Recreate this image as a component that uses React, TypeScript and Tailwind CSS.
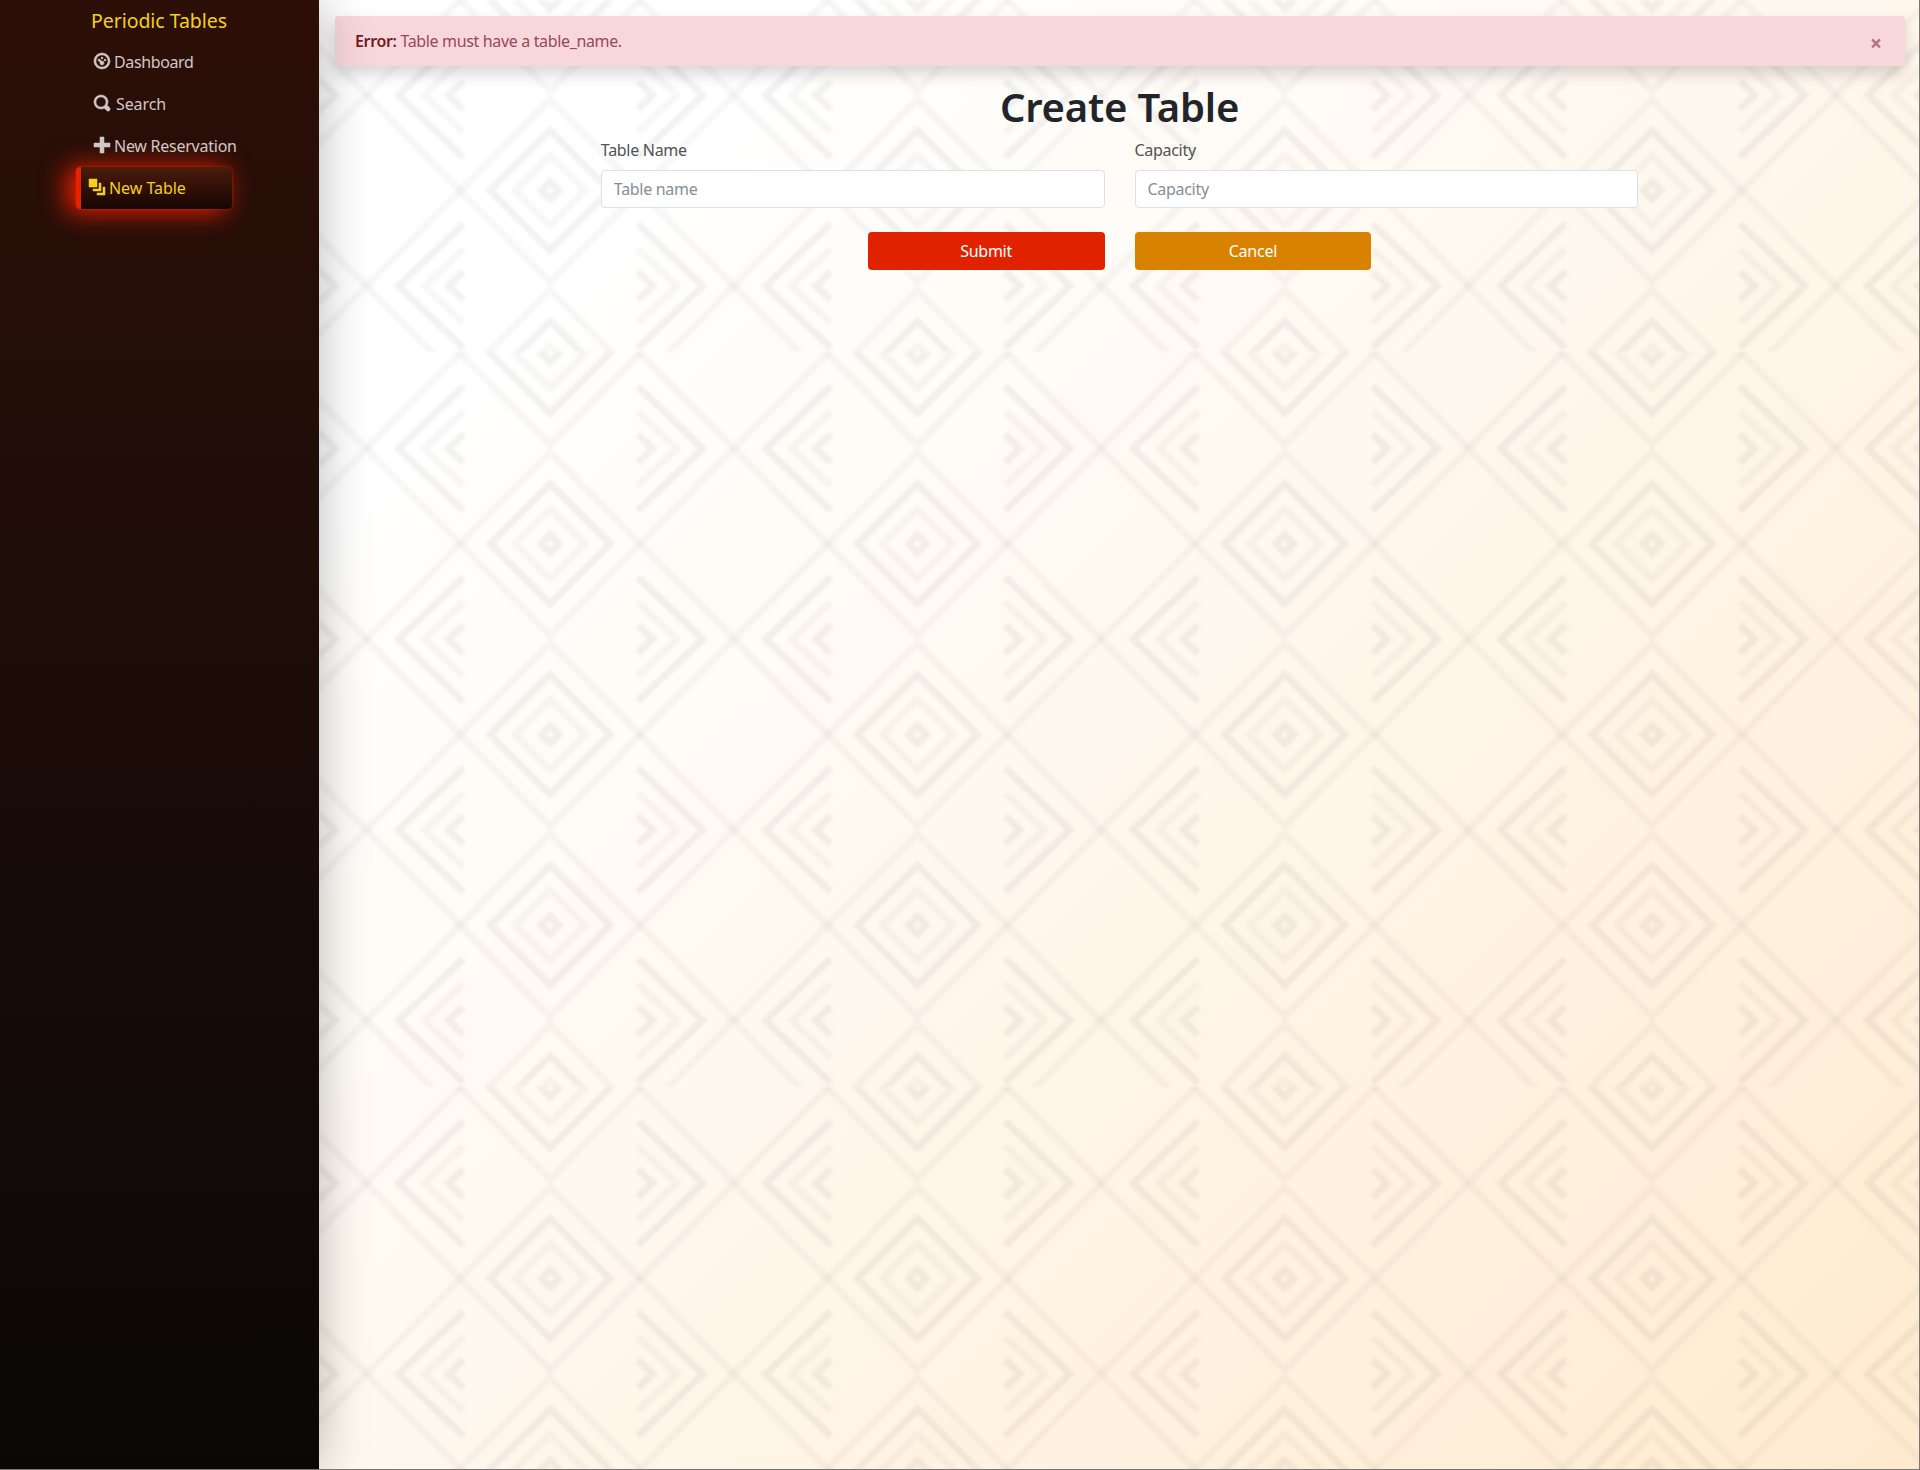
import type { ReactNode } from "react";

const TILE_W = 367.35;
const TILE_H = 734.7;
const STEP = 190.7;
const rows = [-1, 0, 1, 2, 3, 4];

function diamond(cx: number, cy: number, r: number) {
  return `M${cx} ${cy - r}L${cx + r} ${cy}L${cx} ${cy + r}L${cx - r} ${cy}Z`;
}

function chevron(x: number, y: number, end: number, dy: number) {
  return `M${end} ${y - dy}L${x} ${y}L${end} ${y + dy}`;
}

function Backdrop() {
  const mid = TILE_W / 2;
  return (
    <svg className="absolute inset-0 h-full w-full" aria-hidden="true">
      <defs>
        <pattern
          id="weave"
          width={TILE_W}
          height={TILE_H}
          patternUnits="userSpaceOnUse"
          patternTransform="translate(47.4 352.1)"
        >
          <g fill="none" stroke="#1a0800">
            {rows.map((k) => {
              const c = 1 + k * STEP;
              const n = c + STEP / 2;
              return (
                <g key={k}>
                  <g strokeWidth="7" strokeOpacity="0.03">
                    <path d={`M-4 ${n - 4}L${mid} ${n + STEP - 4}L${TILE_W + 4} ${n - 4}`} />
                    <path d={`M-4 ${n + 4}L${mid} ${n - STEP + 4}L${TILE_W + 4} ${n + 4}`} />
                    <path d={diamond(mid, c, 35)} />
                    <path d={chevron(58, n, 97, 37)} />
                    <path d={chevron(TILE_W - 57, n, TILE_W - 96, 37)} />
                  </g>
                  <g strokeWidth="7" strokeOpacity="0.052">
                    <path d={diamond(mid, c, 60)} />
                    <path d={diamond(mid, c, 9)} />
                    <path d={chevron(32, n, 97, 62)} />
                    <path d={chevron(TILE_W - 31, n, TILE_W - 96, 62)} />
                    <path d={chevron(82, n, 97, 14)} />
                    <path d={chevron(TILE_W - 81, n, TILE_W - 96, 14)} />
                  </g>
                </g>
              );
            })}
          </g>
        </pattern>
        <filter id="soften" x="0" y="0" width="100%" height="100%">
          <feGaussianBlur stdDeviation="1.6" />
        </filter>
      </defs>
      <rect width="100%" height="100%" fill="url(#weave)" filter="url(#soften)" />
    </svg>
  );
}

const icons = {
  dashboard:
    "M4 0c-2.2 0-4 1.8-4 4s1.8 4 4 4 4-1.8 4-4-1.8-4-4-4zm0 1c1.66 0 3 1.34 3 3s-1.34 3-3 3-3-1.34-3-3 1.34-3 3-3zm0 1c-.28 0-.5.22-.5.5s.22.5.5.5.5-.22.5-.5-.22-.5-.5-.5zm-1.66 1a.5.5 0 0 0-.19.84l.91.91c-.02.08-.06.16-.06.25 0 .55.45 1 1 1s1-.45 1-1-.45-1-1-1c-.09 0-.17.04-.25.06l-.91-.91a.5.5 0 0 0-.44-.16.5.5 0 0 0-.06 0zm3.16 0c-.28 0-.5.22-.5.5s.22.5.5.5.5-.22.5-.5-.22-.5-.5-.5z",
  search:
    "M3.5 0c-1.93 0-3.5 1.57-3.5 3.5s1.57 3.5 3.5 3.5c.59 0 1.17-.14 1.66-.41a1 1 0 0 0 .13.13l1 1a1.02 1.02 0 1 0 1.44-1.44l-1-1a1 1 0 0 0-.16-.13c.27-.49.44-1.06.44-1.66 0-1.93-1.55-3.5-3.5-3.5zm0 1c1.39 0 2.5 1.11 2.5 2.5 0 .66-.24 1.27-.66 1.72-.01.01-.02.02-.03.03a1 1 0 0 0-.13.13c-.44.4-1.04.63-1.69.63-1.39 0-2.5-1.11-2.5-2.5s1.11-2.5 2.5-2.5z",
  plus: "M3 0v3h-3v2h3v3h2v-3h3v-2h-3v-3h-2z",
  layers: "M0 0v4h4v-4h-4zm5 2v3h-3v1h4v-4h-1zm2 2v3h-3v1h4v-4h-1z",
};

function Icon({ name }: { name: keyof typeof icons }) {
  return (
    <svg
      viewBox="0 0 8 8"
      className="-mt-0.5 h-4 w-4 shrink-0 overflow-visible"
      fill="currentColor"
      stroke="currentColor"
      strokeWidth="0.26"
    >
      <path d={icons[name]} />
    </svg>
  );
}

function NavLink({ icon, children }: { icon: keyof typeof icons; children: ReactNode }) {
  return (
    <a className="flex h-[42px] items-center gap-1 pl-[18px] text-[#cfc8c6]">
      <Icon name={icon} />
      {children}
    </a>
  );
}

function Field({ label, placeholder }: { label: string; placeholder: string }) {
  return (
    <label className="col-span-4 flex flex-col px-[15px]">
      <span className="mb-2 h-6 leading-6 tracking-[-0.3px] text-[#505256]">{label}</span>
      <input
        className="h-[38px] rounded border border-[#dbe1e7] bg-white px-3 tracking-[-0.3px] outline-none placeholder:text-[#868e96]"
        placeholder={placeholder}
      />
    </label>
  );
}

export default function App() {
  return (
    <div className="relative flex h-[1470px] w-[1920px] overflow-hidden bg-white font-['Noto_Sans',sans-serif] text-base">
      <aside className="relative z-10 w-[319px] shrink-0 bg-linear-to-b from-[#2c0f07] to-[#0a0807] shadow-[0_0_48px_rgba(0,0,0,0.28)]">
        <div className="flex h-[41px] items-center pl-[91px] text-[19.5px] text-[#f4cf20]">
          <span className="tracking-[-0.05px]">Periodic Tables</span>
        </div>
        <nav className="pl-[76px] tracking-[-0.25px]">
          <NavLink icon="dashboard">
            <span className="tracking-[-0.38px]">Dashboard</span>
          </NavLink>
          <NavLink icon="search">
            <span className="pl-0.5 tracking-[-0.1px]">Search</span>
          </NavLink>
          <NavLink icon="plus">New Reservation</NavLink>
          <a className="flex h-[42px] w-[156px] items-center gap-1 rounded border-l-[5px] border-[#e62200] bg-linear-to-b from-[#4c1b0d] to-[#170602] pl-2 text-[#f4cf20] shadow-[0_0_2px_#e62200,-8px_2px_26px_1px_rgba(240,34,0,1)]">
            <Icon name="layers" />
            <span className="tracking-[-0.05px]">New Table</span>
          </a>
        </nav>
      </aside>

      <main className="relative flex-1 bg-[linear-gradient(135deg,#ffffff_17%,#fff7ec_53%,#ffeacf_100%)]">
        <Backdrop />
        <div className="relative pt-4">
          <div className="mr-[15px] ml-4 flex h-[50px] items-center justify-between rounded bg-[#f8d7da] pr-[23px] pl-[20px] text-[#96495a] shadow-[0_8px_16px_rgba(0,0,0,0.16)]">
            <p className="tracking-[-0.35px]">
              <strong className="font-semibold text-[#721c24]">Error:</strong> Table must have a table_name.
            </p>
            <button className="mt-1 text-[21px] leading-none font-bold text-[#b5707b]">×</button>
          </div>
          <h1 className="mt-[17px] text-center text-[40px] leading-12 font-semibold tracking-[-0.2px] text-[#212529]">
            Create Table
          </h1>
          <form>
            <div className="mt-[7px] grid grid-cols-12">
              <div className="col-span-2" />
              <Field label="Table Name" placeholder="Table name" />
              <Field label="Capacity" placeholder="Capacity" />
            </div>
            <div className="mt-6 grid grid-cols-12 tracking-[-0.25px]">
              <div className="col-span-4" />
              <div className="col-span-2 px-[15px]">
                <button type="button" className="h-[38px] w-full rounded bg-[#e02200] text-white">
                  Submit
                </button>
              </div>
              <div className="col-span-2 px-[15px]">
                <button type="button" className="h-[38px] w-full rounded bg-[#d98200] text-white">
                  Cancel
                </button>
              </div>
            </div>
          </form>
        </div>
      </main>
      <div className="pointer-events-none absolute inset-0 z-20 border-r border-b border-[#777]" />
    </div>
  );
}
